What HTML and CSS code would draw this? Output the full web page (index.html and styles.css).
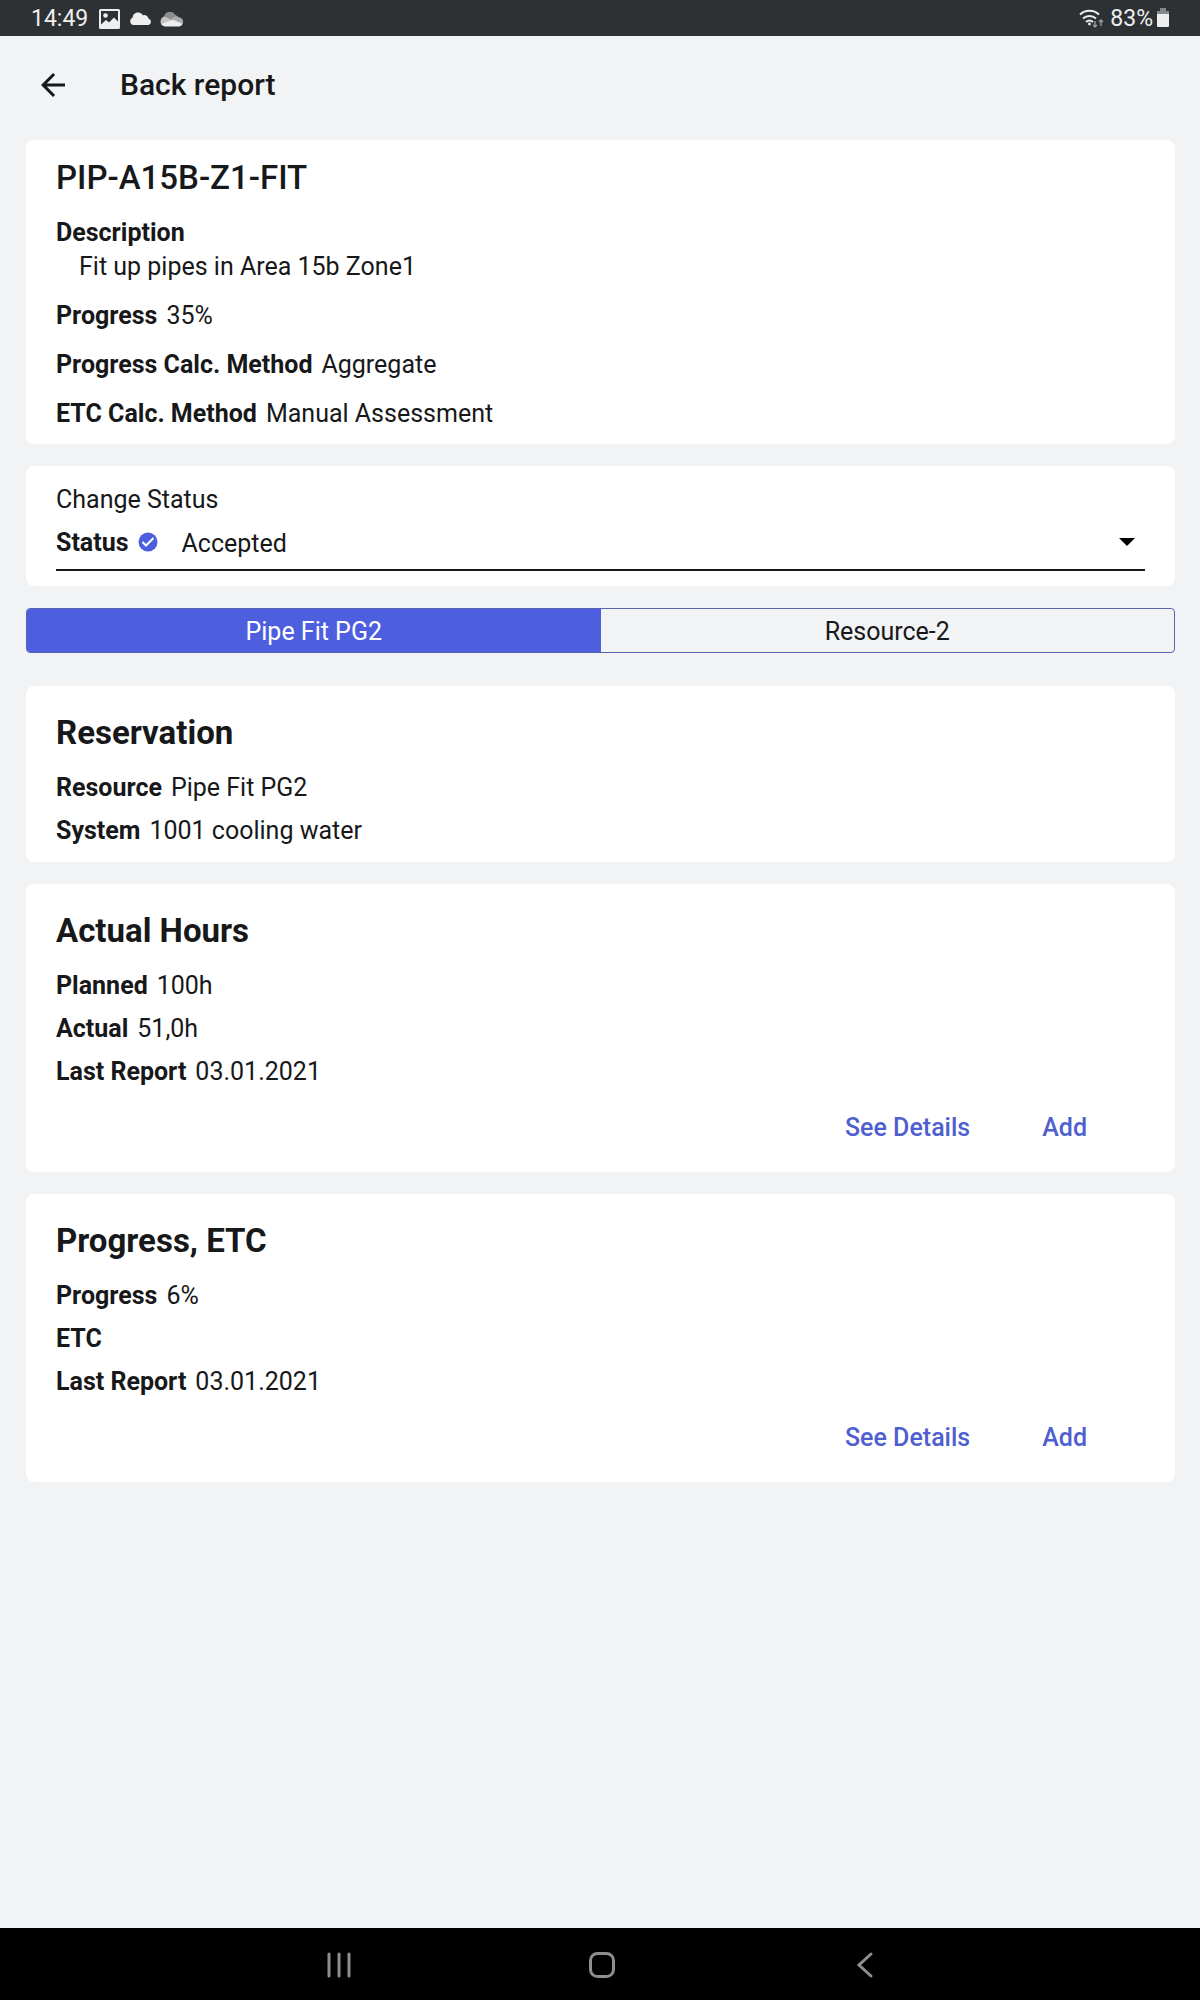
FILE: index.html
```
<!DOCTYPE html>
<html lang="en">
<head>
<meta charset="utf-8">
<meta name="viewport" content="width=device-width, initial-scale=1">
<title>Back report</title>
<link rel="stylesheet" href="styles.css">
</head>
<body>
<div class="statusbar">
  <span>14:49</span>
  <svg class="photo" width="22" height="20" viewBox="0 0 22 20"><path fill="#eee" fill-rule="evenodd" d="M1.500 0h18a1.500 1.500 0 0 1 1.500 1.500v17a1.500 1.500 0 0 1-1.500 1.500h-18A1.500 1.500 0 0 1 0 18.500v-17A1.500 1.500 0 0 1 1.500 0zM2 2v13.500l5-4.500 3 2.500 5-5 4 4V2z"/><circle cx="6.500" cy="6.500" r="2.300" fill="#eee"/></svg>
  <svg class="cloud" width="23" height="14" viewBox="0 0 23 14"><path fill="#eee" d="M4 13a4 4 0 0 1-.4-7.500A5.600 5.600 0 0 1 14 3.200a4.500 4.500 0 0 1 5.600 3.600A3.200 3.200 0 0 1 19.500 13z"/></svg>
  <svg class="cloud" width="23" height="15" viewBox="0 0 23 15"><path fill="#8b8d8f" d="M4 5A6 6 0 0 1 15 2.500l4 3L12 9z"/><path fill="#c4c5c6" d="M4.500 4.600 13 8.500 3 13.800A5 5 0 0 1 4.500 4.600z"/><path fill="#a9abac" d="M11 7.500A6 6 0 0 1 19 5.200 4.500 4.500 0 0 1 22.500 12z"/><path fill="#eee" d="M1.500 12 13 7.800l9.600 4a4 4 0 0 1-3.600 2.700H5A4.500 4.500 0 0 1 1.500 12z"/></svg>
  <span class="spacer"></span>
  <svg class="wifi" width="25" height="20" viewBox="0 0 25 20"><g fill="none" stroke="#eee" stroke-width="2"><path d="M1 5.500a14 14 0 0 1 19 0"/><path d="M4 9.500a9.500 9.500 0 0 1 13 0"/><path d="M7 13a5.500 5.500 0 0 1 7 0"/></g><circle cx="10.500" cy="15" r="1.400" fill="#eee"/><path d="M16 12v6m-2-2 2 2 2-2M22 17v-6m-2 2 2-2 2 2" fill="none" stroke="#999" stroke-width="1.400"/></svg>
  <span class="level">83%</span>
  <svg class="battery" width="12" height="19" viewBox="0 0 12 19"><path fill="#858789" d="M3 0h6v3h3v4H0V3h3z"/><path fill="#eee" d="M0 6h12v12a1 1 0 0 1-1 1H1a1 1 0 0 1-1-1z"/></svg>
</div>
<header class="appbar">
  <button class="back" aria-label="Back"><svg width="36" height="36" viewBox="0 0 24 24"><path fill="#17181a" d="M20 11H7.830l5.590-5.590L12 4l-8 8 8 8 1.410-1.410L7.830 13H20z"/></svg></button>
  <h1>Back report</h1>
</header>
<main class="content">
  <section class="card summary">
    <h2>PIP-A15B-Z1-FIT</h2>
    <dl class="fields">
      <div class="stacked"><dt>Description</dt><dd>Fit up pipes in Area 15b Zone1</dd></div>
      <div><dt>Progress</dt><dd>35%</dd></div>
      <div><dt>Progress Calc. Method</dt><dd>Aggregate</dd></div>
      <div><dt>ETC Calc. Method</dt><dd>Manual Assessment</dd></div>
    </dl>
  </section>
  <section class="card status">
    <p>Change Status</p>
    <div class="picker">
      <label for="status">Status</label>
      <svg class="check" width="20" height="20" viewBox="0 0 20 20"><circle cx="10" cy="10" r="9.500" fill="#4d5edf"/><path d="m4.500 10 3.500 3.500 7.500-7.500" fill="none" stroke="#fff" stroke-width="2"/></svg>
      <select id="status"><option>Accepted</option></select>
      <svg class="caret" width="16" height="8" viewBox="0 0 16 8"><path d="M0 0h16L8 8z"/></svg>
    </div>
  </section>
  <div class="tabs" role="tablist">
    <button role="tab" aria-selected="true">Pipe Fit PG2</button>
    <button role="tab" aria-selected="false">Resource-2</button>
  </div>
  <section class="card">
    <h3>Reservation</h3>
    <dl class="fields">
      <div><dt>Resource</dt><dd>Pipe Fit PG2</dd></div>
      <div><dt>System</dt><dd>1001 cooling water</dd></div>
    </dl>
  </section>
  <section class="card">
    <h3>Actual Hours</h3>
    <dl class="fields">
      <div><dt>Planned</dt><dd>100h</dd></div>
      <div><dt>Actual</dt><dd>51,0h</dd></div>
      <div><dt>Last Report</dt><dd>03.01.2021</dd></div>
    </dl>
    <div class="actions"><button>See Details</button><button>Add</button></div>
  </section>
  <section class="card">
    <h3>Progress, ETC</h3>
    <dl class="fields">
      <div><dt>Progress</dt><dd>6%</dd></div>
      <div><dt>ETC</dt><dd></dd></div>
      <div><dt>Last Report</dt><dd>03.01.2021</dd></div>
    </dl>
    <div class="actions"><button>See Details</button><button>Add</button></div>
  </section>
</main>
<nav class="navbar">
  <button aria-label="Recent apps"><svg width="28" height="28" viewBox="0 0 28 28"><path d="M4 3v22M14 3v22M24 3v22"/></svg></button>
  <button aria-label="Home"><svg width="28" height="28" viewBox="0 0 28 28"><rect x="2.500" y="2.500" width="23" height="23" rx="7"/></svg></button>
  <button aria-label="Go back"><svg width="28" height="28" viewBox="0 0 28 28"><path d="M20 3 8 14l12 11"/></svg></button>
</nav>
</body>
</html>
```
FILE: styles.css
```
* { box-sizing: border-box; }
body {
  margin: 0;
  min-height: 100vh;
  display: flex;
  flex-direction: column;
  background: #f2f3f5;
  color: #17181a;
  font: 25px/34px Roboto, sans-serif;
}
h1, h2, h3, p, dl, dd { margin: 0; }
button, select { font: inherit; color: inherit; border: 0; padding: 0; background: none; }
svg { display: block; flex: none; }

.statusbar {
  height: 36px;
  padding: 2px 31px 0;
  display: flex;
  align-items: center;
  background: #2d3134;
  color: #eee;
  font-size: 23px;
}
.photo { margin-left: 11px; }
.cloud { margin-left: 8px; }
.spacer { flex: 1; }
.level { margin: 0 4px 0 6px; }
.battery { margin-bottom: 4px; }

.appbar {
  height: 104px;
  padding: 0 35px 7px;
  display: flex;
  align-items: center;
  gap: 49px;
}
.appbar h1 { font-size: 30px; font-weight: 500; }

.content { flex: 1; padding: 0 25px 40px 26px; }
.card {
  margin-bottom: 22px;
  padding: 25px 30px 14px;
  border-radius: 8px;
  background: #fff;
}
h2, h3 { margin-bottom: 16px; line-height: 44px; font-size: 33px; }
h2 { font-weight: 500; }
h3 { font-weight: 700; }
.fields { display: grid; gap: 9px; }
.fields div { display: flex; gap: 9px; }
.fields .stacked { display: block; }
.stacked dd { padding-left: 23px; }
dt, .picker label { font-weight: 700; }
.summary { padding: 16px 30px 13px; }
.summary .fields { gap: 15px; }

.status { padding: 17px 30px 15px; }
.picker {
  margin-top: 9px;
  padding: 0 10px 7px 0;
  display: flex;
  align-items: center;
  border-bottom: 2px solid #17181a;
}
.picker label { padding-bottom: 2px; }
.check { margin: 0 24px 5px 9px; }
.caret { margin-bottom: 4px; }
.picker select { flex: 1; height: 34px; appearance: none; }

.tabs {
  height: 45px;
  margin-bottom: 33px;
  display: grid;
  grid-template-columns: 1fr 1fr;
  border: 1px solid #5866b4;
  border-radius: 4px;
  overflow: hidden;
}
.tabs button { padding-top: 2px; }
.tabs [aria-selected="true"] { background: #4d5edf; color: #fff; }

.actions { margin: 22px 22px 13px 0; display: flex; justify-content: flex-end; }
.actions button { padding: 0 36px; color: #4f5fcf; font-weight: 500; }

.navbar {
  height: 72px;
  padding: 2px 0 0 4px;
  display: flex;
  justify-content: center;
  align-items: center;
  background: #000;
}
.navbar button { width: 263px; display: flex; justify-content: center; }
.navbar svg { fill: none; stroke: #8e8e8e; stroke-width: 3; stroke-linecap: round; }
```
